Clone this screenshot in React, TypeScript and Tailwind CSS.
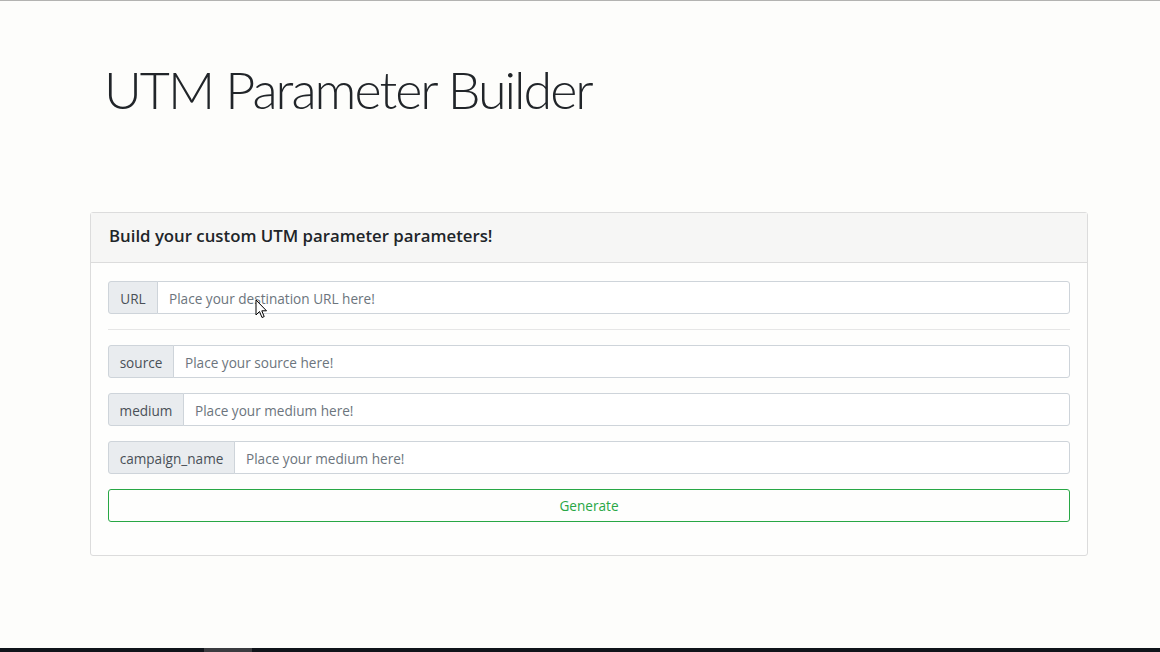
const fields = [
  { label: "source", width: "w-[66px]", placeholder: "Place your source here!" },
  { label: "medium", width: "w-[76px]", placeholder: "Place your medium here!" },
  { label: "campaign_name", width: "w-[127px]", placeholder: "Place your medium here!" },
];

function InputGroup({ label, width, placeholder }: { label: string; width: string; placeholder: string }) {
  return (
    <div className="flex h-[33px] w-full">
      <span
        className={`${width} flex shrink-0 items-center justify-center rounded-l-[3px] border border-[#ced4da] bg-[#e9ecef] pt-[3px] text-[13.6px] text-[#495057]`}
      >
        {label}
      </span>
      <input
        type="text"
        placeholder={placeholder}
        className="-ml-px h-full flex-1 rounded-r-[3px] border border-[#ced4da] bg-white px-[11px] pt-[2px] text-[13.6px] text-[#495057] outline-none placeholder:text-[#6c757d]"
      />
    </div>
  );
}

function Cursor() {
  return (
    <svg className="absolute left-[255px] top-[299px]" width="13" height="20" viewBox="0 0 13 20">
      <path d="M1 1 L1 16 L4.5 12.5 L7 18.5 L9.2 17.6 L6.8 11.8 L11.5 11.8 Z" fill="#fff" stroke="#000" strokeWidth="1" strokeLinejoin="round" />
    </svg>
  );
}

export default function App() {
  return (
    <div
      className="relative flex min-h-[652px] flex-col bg-[#fdfdfb]"
      style={{ fontFamily: '"Open Sans", "Noto Sans", sans-serif' }}
    >
      <div className="h-px bg-[#b3b3b1]" />
      <h1
        className="ml-[104px] mt-[56px] text-[52px] font-light leading-[64px] tracking-[-2px] text-[#212529]"
        style={{ fontFamily: 'Lato, "Open Sans", sans-serif' }}
      >
        UTM Parameter Builder
      </h1>

      <section className="ml-[90px] mt-[91px] w-[998px] rounded-[3px] border border-[#dcdcdc] bg-[#fefefd]">
        <div className="flex h-[50px] items-center border-b border-[#dcdcdc] bg-[#f6f6f5] px-[18px] pb-[3px]">
          <h2 className="text-[16.8px] font-semibold text-[#212529]">Build your custom UTM parameter parameters!</h2>
        </div>
        <div className="px-[17px] pb-[33px] pt-[18px]">
          <InputGroup label="URL" width="w-[50px]" placeholder="Place your destination URL here!" />
          <hr className="my-[15px] border-t border-[#e6e6e6]" />
          <div className="flex flex-col gap-[15px]">
            {fields.map((f) => (
              <InputGroup key={f.label} {...f} />
            ))}
            <button className="h-[33px] w-full rounded-[3px] border border-[#28a745] pt-[2px] text-[13.6px] text-[#28a745]">
              Generate
            </button>
          </div>
        </div>
      </section>

      <div className="flex-1" />
      <div className="flex h-[4px] bg-[#10141a]">
        <div className="ml-[204px] w-[48px] bg-[#3b3c40]" />
      </div>
      <Cursor />
    </div>
  );
}
